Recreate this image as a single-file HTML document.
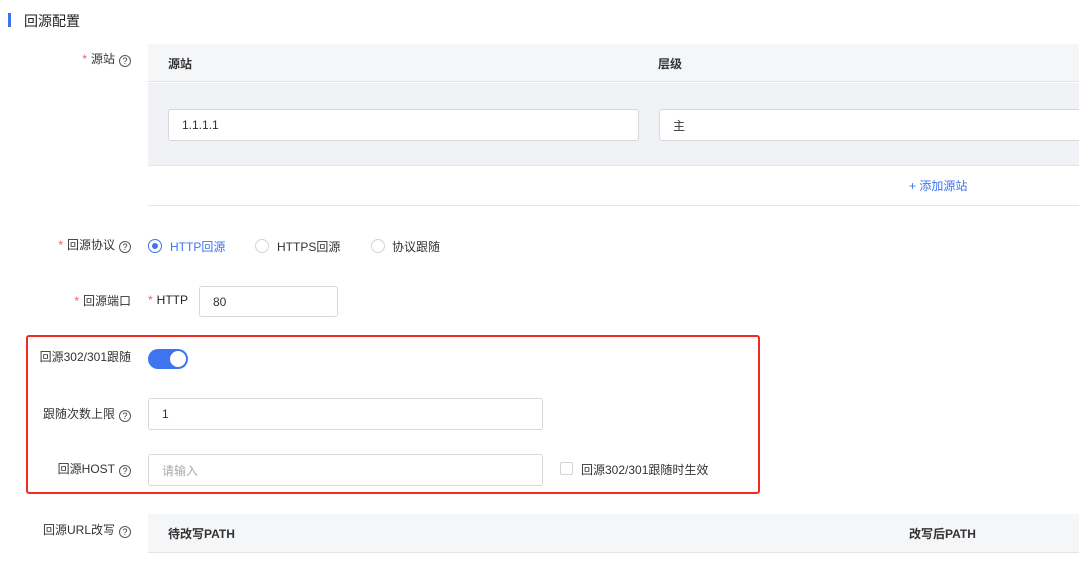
<!DOCTYPE html><html><head><meta charset="utf-8"><style>
*{box-sizing:border-box;margin:0;padding:0}
body{width:1079px;height:573px;overflow:hidden;background:#fff;font-family:"Liberation Sans","Noto Sans CJK SC",sans-serif;font-size:12px;color:#333;position:relative}
.a{position:absolute;white-space:nowrap}
.lab{position:absolute;right:948px;white-space:nowrap;line-height:16px}
.st{color:#f5585d;margin-right:4px}
.q{display:inline-block;width:12px;height:12px;border:1px solid #555;border-radius:50%;font-size:9px;line-height:10px;text-align:center;margin-left:4px;vertical-align:-1px}
.in{position:absolute;border:1px solid #d6d8dc;border-radius:3px;background:#fff;padding-left:13px;font-size:12px;display:flex;align-items:center}
.rd{position:absolute;width:14px;height:14px;border:1px solid #d0d3d8;border-radius:50%;background:#fff}
</style></head><body>
<div class="a" style="left:8px;top:13px;width:3px;height:14px;background:#3e74f0"></div>
<div class="a" style="left:24px;top:11px;font-size:14px;color:#222">回源配置</div>

<div class="lab" style="top:51px"><span class="st">*</span>源站<span class="q">?</span></div>
<div class="a" style="left:148px;top:44px;width:931px;height:38px;background:#f5f6f8;border-bottom:1px solid #e3e5e9"></div>
<div class="a" style="left:168px;top:55px;font-weight:bold;color:#333">源站</div>
<div class="a" style="left:658px;top:55px;font-weight:bold;color:#333">层级</div>
<div class="a" style="left:148px;top:83px;width:931px;height:83px;background:#f1f2f5;border-bottom:1px solid #e3e5e9"></div>
<div class="in" style="left:168px;top:109px;width:471px;height:32px">1.1.1.1</div>
<div class="in" style="left:659px;top:109px;width:430px;height:32px">主</div>
<div class="a" style="left:148px;top:205px;width:931px;height:1px;background:#e3e5e9"></div>
<div class="a" style="left:909px;top:177px;color:#3e74f0">+ 添加源站</div>

<div class="lab" style="top:237px"><span class="st">*</span>回源协议<span class="q">?</span></div>
<div class="rd" style="left:148px;top:239px;border-color:#3e74f0"><div style="position:absolute;left:3px;top:3px;width:6px;height:6px;border-radius:50%;background:#3e74f0"></div></div>
<div class="a" style="left:170px;top:238px;color:#3e74f0">HTTP回源</div>
<div class="rd" style="left:255px;top:239px"></div>
<div class="a" style="left:277px;top:238px">HTTPS回源</div>
<div class="rd" style="left:371px;top:239px"></div>
<div class="a" style="left:392px;top:238px">协议跟随</div>

<div class="lab" style="top:293px"><span class="st">*</span>回源端口</div>
<div class="a" style="left:148px;top:293px;color:#222"><span class="st">*</span>HTTP</div>
<div class="in" style="left:199px;top:286px;width:139px;height:31px">80</div>

<div class="a" style="left:26px;top:335px;width:734px;height:159px;border:2.5px solid #f22a22;border-radius:3px"></div>
<div class="lab" style="top:349px">回源302/301跟随</div>
<div class="a" style="left:148px;top:349px;width:40px;height:20px;border-radius:10px;background:#3e74f0"><div style="position:absolute;right:2px;top:2px;width:16px;height:16px;border-radius:50%;background:#fff"></div></div>
<div class="lab" style="top:406px">跟随次数上限<span class="q">?</span></div>
<div class="in" style="left:148px;top:398px;width:395px;height:32px">1</div>
<div class="lab" style="top:461px">回源HOST<span class="q">?</span></div>
<div class="in" style="left:148px;top:454px;width:395px;height:32px;color:#aaa">请输入</div>
<div class="a" style="left:560px;top:462px;width:13px;height:13px;border:1px solid #d0d3d8;border-radius:2px"></div>
<div class="a" style="left:581px;top:461px">回源302/301跟随时生效</div>

<div class="lab" style="top:522px">回源URL改写<span class="q">?</span></div>
<div class="a" style="left:148px;top:514px;width:931px;height:39px;background:#f5f6f8;border-bottom:1px solid #e3e5e9"></div>
<div class="a" style="left:168px;top:525px;font-weight:bold">待改写PATH</div>
<div class="a" style="left:909px;top:525px;font-weight:bold">改写后PATH</div>
</body></html>
